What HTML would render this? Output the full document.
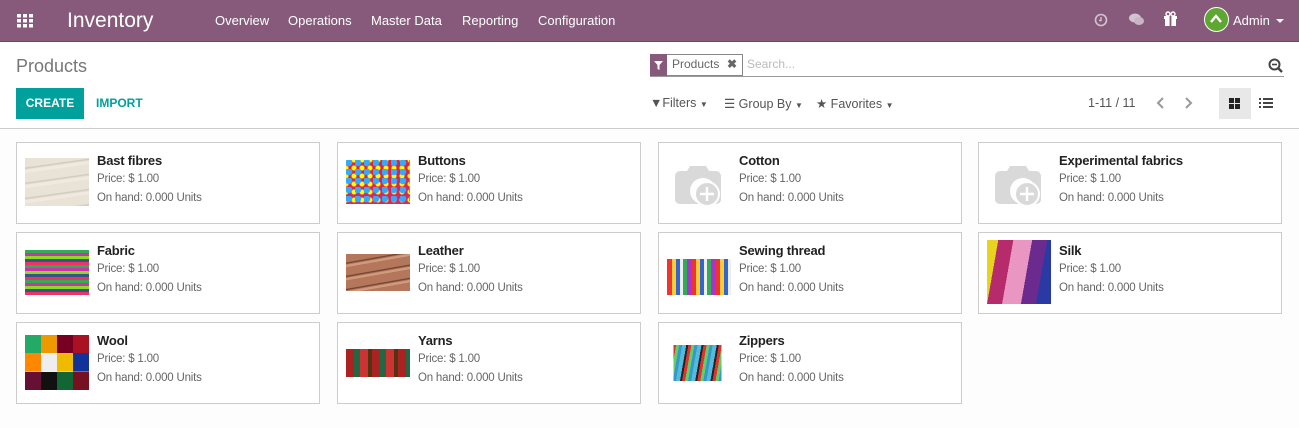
<!DOCTYPE html>
<html><head><meta charset="utf-8"><style>
*{box-sizing:border-box;margin:0;padding:0}
body{width:1299px;height:428px;overflow:hidden;background:#fdfdfd;font-family:"Liberation Sans",sans-serif;font-size:12px;color:#4c4c4c;position:relative}
.nav{position:absolute;left:0;top:0;width:1299px;height:42px;background:#875a7b;border-bottom:1px solid #6b4763;color:#fff}
.nav .t{position:absolute;top:0;line-height:42px}
.cp{position:absolute;left:0;top:42px;width:1299px;height:87px;background:#fff;border-bottom:1px solid #ccc}
.a{position:absolute}
.card{position:absolute;width:304px;height:82px;background:#fff;border:1px solid #ccc}
.card .im{position:absolute;left:8px;width:64px}
.card .n{position:absolute;left:80px;top:10px;font-size:13px;font-weight:bold;color:#222;letter-spacing:-0.2px}
.card .p{position:absolute;left:80px;top:30px;color:#666;font-size:11.5px;letter-spacing:-0.2px}
.card .h{position:absolute;left:80px;top:49px;color:#666;font-size:11.5px;letter-spacing:-0.2px}
</style></head><body>
<div class="nav">
 <svg class="a" style="left:17px;top:14px" width="16" height="14"><g fill="#fff"><rect x="0" y="0" width="4" height="3.5"/><rect x="6" y="0" width="4" height="3.5"/><rect x="12" y="0" width="4" height="3.5"/><rect x="0" y="5" width="4" height="3.5"/><rect x="6" y="5" width="4" height="3.5"/><rect x="12" y="5" width="4" height="3.5"/><rect x="0" y="10" width="4" height="3.5"/><rect x="6" y="10" width="4" height="3.5"/><rect x="12" y="10" width="4" height="3.5"/></g></svg>
 <div class="t" style="left:67px;font-size:21px">Inventory</div>
 <div class="t" style="left:215px;font-size:13px">Overview</div>
 <div class="t" style="left:288px;font-size:13px">Operations</div>
 <div class="t" style="left:371px;font-size:13px">Master Data</div>
 <div class="t" style="left:462px;font-size:13px">Reporting</div>
 <div class="t" style="left:538px;font-size:13px">Configuration</div>
 <svg class="a" style="left:1094px;top:13px" width="14" height="14"><circle cx="7" cy="7" r="5.5" fill="none" stroke="#d3c3cf" stroke-width="1.6"/><path d="M7 4v3.5h-2" stroke="#d3c3cf" stroke-width="1.4" fill="none"/></svg>
 <svg class="a" style="left:1128px;top:12px" width="17" height="15"><ellipse cx="7" cy="6" rx="6" ry="4.5" fill="#d3c3cf"/><ellipse cx="11" cy="9" rx="5" ry="4" fill="#c9b5c4"/></svg>
 <svg class="a" style="left:1163px;top:11px" width="15" height="16"><rect x="1" y="5" width="13" height="3" fill="#fff"/><rect x="2" y="8" width="11" height="7" fill="#fff"/><rect x="6.6" y="5" width="1.8" height="10" fill="#875a7b"/><circle cx="5" cy="3" r="2" fill="none" stroke="#fff" stroke-width="1.4"/><circle cx="10" cy="3" r="2" fill="none" stroke="#fff" stroke-width="1.4"/></svg>
 <div class="a" style="left:1204px;top:7px;width:25px;height:25px;border-radius:50%;background:#5fa733;border:1.5px solid #fff"><svg width="22" height="22"><path d="M6 14l5-6 5 6" stroke="#fff" stroke-width="2.4" fill="none"/></svg></div>
 <div class="t" style="left:1233px;font-size:13px">Admin</div>
 <div class="a" style="left:1276px;top:19px;border:4px solid transparent;border-top-color:#fff;border-bottom:0"></div>
</div>
<div class="cp">
 <div class="a" style="left:16px;top:14px;font-size:18px;color:#777">Products</div>
 <div class="a" style="left:16px;top:46px;width:68px;height:31px;background:#00a09d;color:#fff;font-size:12px;line-height:31px;text-align:center;font-weight:bold">CREATE</div>
 <div class="a" style="left:96px;top:46px;height:31px;color:#00a09d;font-size:12px;line-height:31px;font-weight:bold">IMPORT</div>
 <div class="a" style="left:650px;top:12px;width:93px;height:22px;border:1px solid #888"></div>
 <div class="a" style="left:650px;top:12px;width:17px;height:22px;background:#875a7b"><svg width="17" height="22"><path d="M4 7h9l-3.5 4v5l-2-1v-4z" fill="#fff"/></svg></div>
 <div class="a" style="left:672px;top:15px;font-size:12px;color:#666">Products</div>
 <div class="a" style="left:727px;top:15px;font-size:12px;color:#666;font-weight:bold">✖</div>
 <div class="a" style="left:747px;top:15px;font-size:12px;color:#bbb">Search...</div>
 <div class="a" style="left:650px;top:34px;width:634px;height:1px;background:#999"></div>
 <svg class="a" style="left:1268px;top:16px" width="16" height="16"><circle cx="6.5" cy="6.5" r="5" fill="none" stroke="#444" stroke-width="2"/><path d="M10 10l4 4" stroke="#444" stroke-width="2.4"/><path d="M4 6.5h5" stroke="#444" stroke-width="1.6"/></svg>
 <div class="a" style="left:650px;top:54px;font-size:12.5px;color:#555">▼Filters <span style="font-size:8px">▼</span></div>
 <div class="a" style="left:724px;top:54px;font-size:12.5px;color:#555">☰ Group By <span style="font-size:8px">▼</span></div>
 <div class="a" style="left:816px;top:54px;font-size:12.5px;color:#555">★ Favorites <span style="font-size:8px">▼</span></div>
 <div class="a" style="left:1088px;top:54px;font-size:12.5px;color:#555">1-11 / 11</div>
 <svg class="a" style="left:1155px;top:54px" width="12" height="14"><path d="M8 2l-5 5 5 5" stroke="#999" stroke-width="2" fill="none"/></svg>
 <svg class="a" style="left:1182px;top:54px" width="12" height="14"><path d="M4 2l5 5-5 5" stroke="#999" stroke-width="2" fill="none"/></svg>
 <div class="a" style="left:1219px;top:46px;width:32px;height:31px;background:#e8e8e8"><svg width="32" height="31"><g fill="#222"><rect x="10" y="10" width="5" height="5"/><rect x="16" y="10" width="5" height="5"/><rect x="10" y="16" width="5" height="5"/><rect x="16" y="16" width="5" height="5"/></g></svg></div>
 <svg class="a" style="left:1259px;top:55px" width="14" height="12"><g fill="#444"><rect x="0" y="1" width="2" height="2"/><rect x="4" y="1" width="10" height="2"/><rect x="0" y="5" width="2" height="2"/><rect x="4" y="5" width="10" height="2"/><rect x="0" y="9" width="2" height="2"/><rect x="4" y="9" width="10" height="2"/></g></svg>
</div>

<div class="card" style="left:16px;top:142px"><div class="im" style="top:15px;height:48px;background:repeating-linear-gradient(172deg,#e9e2d6 0 9px,#cfc7b9 10px,#efe9df 12px 15px)"></div><div class="n">Bast fibres</div><div class="p">Price: $ 1.00</div><div class="h">On hand: 0.000 Units</div></div>
<div class="card" style="left:337px;top:142px"><div class="im" style="top:17px;height:44px;background:radial-gradient(circle at 30% 30%,#3af 0 3px,transparent 4px) 0 0/9px 9px,radial-gradient(circle,#ff0 0 2px,transparent 3px) 4px 4px/8px 8px,linear-gradient(#e4203a,#d02a6a)"></div><div class="n">Buttons</div><div class="p">Price: $ 1.00</div><div class="h">On hand: 0.000 Units</div></div>
<div class="card" style="left:658px;top:142px"><svg class="im" style="top:14px" width="64" height="52"><path d="M8 20q0-6 6-6h6l3-5h16l3 5h6q6 0 6 6v22q0 5-6 5H14q-6 0-6-5z" fill="#d9d9d9"/><circle cx="36" cy="34" r="13" fill="#fff"/><circle cx="40" cy="37" r="12" fill="#d9d9d9" stroke="#fff" stroke-width="2"/><path d="M40 30v14M33 37h14" stroke="#fff" stroke-width="2.5"/></svg><div class="n">Cotton</div><div class="p">Price: $ 1.00</div><div class="h">On hand: 0.000 Units</div></div>
<div class="card" style="left:978px;top:142px"><svg class="im" style="top:14px" width="64" height="52"><path d="M8 20q0-6 6-6h6l3-5h16l3 5h6q6 0 6 6v22q0 5-6 5H14q-6 0-6-5z" fill="#d9d9d9"/><circle cx="36" cy="34" r="13" fill="#fff"/><circle cx="40" cy="37" r="12" fill="#d9d9d9" stroke="#fff" stroke-width="2"/><path d="M40 30v14M33 37h14" stroke="#fff" stroke-width="2.5"/></svg><div class="n">Experimental fabrics</div><div class="p">Price: $ 1.00</div><div class="h">On hand: 0.000 Units</div></div>

<div class="card" style="left:16px;top:232px"><div class="im" style="top:17px;height:45px;background:repeating-linear-gradient(#3a5 0 3px,#c3a 3px 6px,#8d2 6px 9px,#358 9px 12px,#e36 12px 15px)"></div><div class="n">Fabric</div><div class="p">Price: $ 1.00</div><div class="h">On hand: 0.000 Units</div></div>
<div class="card" style="left:337px;top:232px"><div class="im" style="top:21px;height:37px;background:repeating-linear-gradient(170deg,#b5775b 0 8px,#6a3b2a 9px,#d19a7c 11px 13px)"></div><div class="n">Leather</div><div class="p">Price: $ 1.00</div><div class="h">On hand: 0.000 Units</div></div>
<div class="card" style="left:658px;top:232px"><div class="im" style="top:16px;height:46px;background:linear-gradient(#fff 0 10px,transparent 10px),repeating-linear-gradient(90deg,#e33 0 5px,#fc3 5px 9px,#36c 9px 13px,#eee 13px 16px,#3a5 16px 20px,#a3c 20px 24px)"></div><div class="n">Sewing thread</div><div class="p">Price: $ 1.00</div><div class="h">On hand: 0.000 Units</div></div>
<div class="card" style="left:978px;top:232px"><div class="im" style="top:7px;height:64px;background:linear-gradient(100deg,#e8d41e 0 15%,#b52b6c 15% 35%,#e997c2 35% 60%,#6b2b8e 60% 80%,#2a3aa5 80%)"></div><div class="n">Silk</div><div class="p">Price: $ 1.00</div><div class="h">On hand: 0.000 Units</div></div>

<div class="card" style="left:16px;top:322px"><div class="im" style="top:12px;height:55px;background:linear-gradient(90deg,#2a6 0 25%,#e90 25% 50%,#702 50% 75%,#a12 75%) 0 0/100% 33% no-repeat,linear-gradient(90deg,#f80 0 25%,#eee 25% 50%,#eb0 50% 75%,#139 75%) 0 50%/100% 34% no-repeat,linear-gradient(90deg,#613 0 25%,#111 25% 50%,#163 50% 75%,#712 75%) 0 100%/100% 33% no-repeat"></div><div class="n">Wool</div><div class="p">Price: $ 1.00</div><div class="h">On hand: 0.000 Units</div></div>
<div class="card" style="left:337px;top:322px"><div class="im" style="top:26px;height:28px;background:repeating-linear-gradient(90deg,#a22 0 8px,#264 8px 14px,#c33 14px 22px,#531 22px 26px)"></div><div class="n">Yarns</div><div class="p">Price: $ 1.00</div><div class="h">On hand: 0.000 Units</div></div>
<div class="card" style="left:658px;top:322px"><div class="im" style="top:22px;height:36px;background:linear-gradient(90deg,#fff 0 10%,transparent 10% 85%,#fff 85%),repeating-linear-gradient(100deg,#5bd 0 4px,#222 4px 6px,#d33 6px 9px,#6c6 9px 12px,#39c 12px 15px)"></div><div class="n">Zippers</div><div class="p">Price: $ 1.00</div><div class="h">On hand: 0.000 Units</div></div>
</body></html>
